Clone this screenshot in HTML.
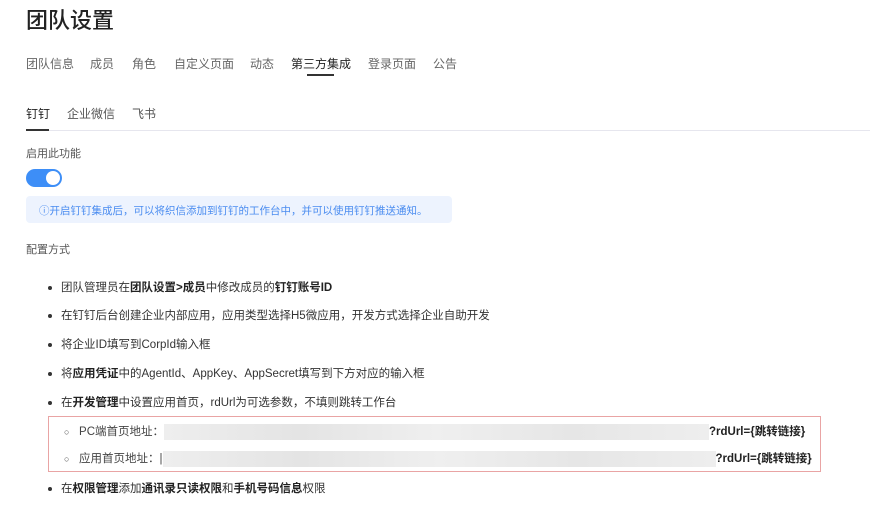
<!DOCTYPE html>
<html><head><meta charset="utf-8"><style>
body{margin:0;width:870px;height:511px;overflow:hidden;background:#fff;font-family:"Liberation Sans","Noto Sans CJK SC",sans-serif;color:#333;position:relative}
.a{position:absolute;white-space:nowrap}
h1{position:absolute;left:26px;top:3px;margin:0;font-size:22px;font-weight:500;color:#222}
.tab{position:absolute;top:55px;font-size:12px;color:#666}
.st{position:absolute;top:105px;font-size:12px;color:#555}
.li{position:absolute;left:48px;font-size:11.5px;color:#333}
.li:before{content:"";position:absolute;left:0;top:7px;width:4px;height:4px;border-radius:50%;background:#333}
.li span{margin-left:13px}
b{font-weight:700;color:#222}
.blur{display:inline-block;background:linear-gradient(90deg,#eee,#e4e4e4,#efefef,#e6e6e6,#eee);height:16px;vertical-align:middle}
</style></head><body>
<h1>团队设置</h1>
<div class="tab" style="left:26px">团队信息</div>
<div class="tab" style="left:90px">成员</div>
<div class="tab" style="left:132px">角色</div>
<div class="tab" style="left:174px">自定义页面</div>
<div class="tab" style="left:250px">动态</div>
<div class="tab" style="left:291px;color:#222">第三方集成</div>
<div class="a" style="left:307px;top:74px;width:27px;height:2px;background:#333"></div>
<div class="tab" style="left:368px">登录页面</div>
<div class="tab" style="left:433px">公告</div>
<div class="st" style="left:26px;color:#222">钉钉</div>
<div class="st" style="left:67px">企业微信</div>
<div class="st" style="left:132px">飞书</div>
<div class="a" style="left:26px;top:130px;width:844px;height:1px;background:#e6e6ee"></div>
<div class="a" style="left:26px;top:129px;width:23px;height:2px;background:#333"></div>
<div class="a" style="left:26px;top:145px;font-size:11px;color:#555">启用此功能</div>
<div class="a" style="left:26px;top:169px;width:36px;height:18px;border-radius:9px;background:#3d8ef7"><div style="position:absolute;right:2px;top:2px;width:14px;height:14px;border-radius:50%;background:#fff"></div></div>
<div class="a" style="left:26px;top:196px;width:426px;height:27px;border-radius:4px;background:#edf3fe"></div>
<div class="a" style="left:39px;top:203px;font-size:10.5px;color:#4a8cf0">ⓘ开启钉钉集成后，可以将织信添加到钉钉的工作台中，并可以使用钉钉推送通知。</div>
<div class="a" style="left:26px;top:241px;font-size:11px;color:#555">配置方式</div>
<div class="li" style="top:279px"><span>团队管理员在<b>团队设置&gt;成员</b>中修改成员的<b>钉钉账号ID</b></span></div>
<div class="li" style="top:307px"><span>在钉钉后台创建企业内部应用，应用类型选择H5微应用，开发方式选择企业自助开发</span></div>
<div class="li" style="top:336px"><span>将企业ID填写到CorpId输入框</span></div>
<div class="li" style="top:365px"><span>将<b>应用凭证</b>中的AgentId、AppKey、AppSecret填写到下方对应的输入框</span></div>
<div class="li" style="top:394px"><span>在<b>开发管理</b>中设置应用首页，rdUrl为可选参数，不填则跳转工作台</span></div>
<div class="a" style="left:48px;top:416px;width:773px;height:56px;border:1px solid #e9a4a4;box-sizing:border-box"></div>
<div class="a" style="left:64px;top:423px;font-size:11.5px;color:#444"><span style="font-size:9px">○</span>&nbsp;&nbsp;&nbsp;PC端首页地址：<span class="blur" style="width:545px"></span><b>?rdUrl={跳转链接}</b></div>
<div class="a" style="left:64px;top:450px;font-size:11.5px;color:#444"><span style="font-size:9px">○</span>&nbsp;&nbsp;&nbsp;应用首页地址：|<span class="blur" style="width:553px"></span><b>?rdUrl={跳转链接}</b></div>
<div class="li" style="top:480px"><span>在<b>权限管理</b>添加<b>通讯录只读权限</b>和<b>手机号码信息</b>权限</span></div>
</body></html>
